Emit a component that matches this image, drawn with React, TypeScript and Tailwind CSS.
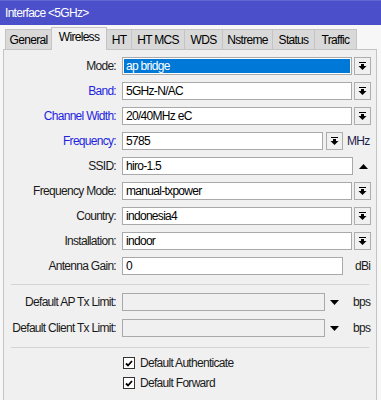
import React from "react";

const FONT = "font-['Liberation_Sans',Arial,sans-serif]";

const DropIcon = () => (
  <svg width="9" height="9" viewBox="0 0 9 9" className="fill-black">
    <rect x="1" y="0" width="7" height="1" />
    <rect x="3" y="2" width="3" height="2" />
    <path d="M0.5 4h8L4.5 8z" />
  </svg>
);

const DropButton = () => (
  <div className="w-[17px] h-[18px] border border-[#adadad] bg-[#f0f0f0] flex items-center justify-center shrink-0">
    <DropIcon />
  </div>
);

const tabs = [
  { name: "General", w: "w-[47px]" },
  { name: "Wireless", w: "w-[56px]" },
  { name: "HT", w: "w-[26px]" },
  { name: "HT MCS", w: "w-[54px]" },
  { name: "WDS", w: "w-[39px]" },
  { name: "Nstreme", w: "w-[51px]" },
  { name: "Status", w: "w-[43px]" },
  { name: "Traffic", w: "w-[43px]" },
];

type Row = {
  label: string;
  value: string;
  blue?: boolean;
  kind: "select" | "freq" | "ssid" | "gain";
  selected?: boolean;
};

const rows: Row[] = [
  { label: "Mode:", value: "ap bridge", kind: "select", selected: true },
  { label: "Band:", value: "5GHz-N/AC", kind: "select", blue: true },
  { label: "Channel Width:", value: "20/40MHz eC", kind: "select", blue: true },
  { label: "Frequency:", value: "5785", kind: "freq", blue: true },
  { label: "SSID:", value: "hiro-1.5", kind: "ssid" },
  { label: "Frequency Mode:", value: "manual-txpower", kind: "select" },
  { label: "Country:", value: "indonesia4", kind: "select" },
  { label: "Installation:", value: "indoor", kind: "select" },
  { label: "Antenna Gain:", value: "0", kind: "gain" },
];

const Label = ({ text, blue }: { text: string; blue?: boolean }) => (
  <div
    className={`w-[112px] text-right shrink-0 whitespace-nowrap leading-[18px] ${
      blue ? "text-[#1f1fe0]" : "text-[#1a1a1a]"
    }`}
  >
    {text}
  </div>
);

const Field = ({ value, width, selected }: { value: string; width: string; selected?: boolean }) => (
  <div className={`${width} h-[18px] border border-[#a9a9a9] bg-white shrink-0 p-px`}>
    <div
      className={`h-full leading-[14px] pl-[2px] whitespace-nowrap overflow-hidden ${
        selected ? "bg-[#0078d7] text-white" : "text-black"
      }`}
    >
      {value}
    </div>
  </div>
);

const Checkbox = ({ label }: { label: string }) => (
  <div className="flex items-center h-[20px]">
    <div className="w-[12px] h-[12px] border border-[#333] bg-white flex items-center justify-center">
      <svg width="8" height="7" viewBox="0 0 8 7">
        <path d="M1 3.5l2 2L7 1" fill="none" stroke="black" strokeWidth="1.8" />
      </svg>
    </div>
    <span className="ml-[5px] text-[#1a1a1a]">{label}</span>
  </div>
);

export default function App() {
  return (
    <div
      className={`w-[381px] h-[400px] bg-[#f7f7f7] overflow-hidden text-[12px] tracking-[-0.7px] ${FONT}`}
    >
      <div className="h-[25px] bg-[#4b4fc9] text-white pl-[5px] flex items-center border-t border-[#6366d2]">
        Interface &lt;5GHz&gt;
      </div>

      <div className="h-[24px] flex items-end pl-[5px]">
        {tabs.map((t) =>
          t.name === "Wireless" ? (
            <div
              key={t.name}
              className={`${t.w} h-[23px] -mb-px -ml-px relative bg-[#f0f0f0] border border-b-0 border-[#c4c4c4] text-center leading-[19px] text-black`}
            >
              {t.name}
            </div>
          ) : (
            <div
              key={t.name}
              className={`${t.w} h-[20px] bg-[#d9d9d9] border border-b-0 border-[#c4c4c4] -ml-px first:ml-0 text-center leading-[20px] text-black`}
            >
              {t.name}
            </div>
          )
        )}
      </div>

      <div className="ml-[3px] w-[374px] h-[351px] bg-[#f0f0f0] border border-b-0 border-[#c4c4c4] pt-[7px]">
        <div className="flex flex-col gap-[7px]">
          {rows.map((r) => (
            <div key={r.label} className="flex items-center h-[18px]">
              <Label text={r.label} blue={r.blue} />
              <div className="ml-[6px] flex items-center">
                {r.kind === "select" && (
                  <>
                    <Field value={r.value} width="w-[230px]" selected={r.selected} />
                    <div className="ml-[2px]">
                      <DropButton />
                    </div>
                  </>
                )}
                {r.kind === "freq" && (
                  <>
                    <Field value={r.value} width="w-[201px]" />
                    <div className="ml-[3px]">
                      <DropButton />
                    </div>
                    <span className="ml-[4px] text-[#1c1c4a]">MHz</span>
                  </>
                )}
                {r.kind === "ssid" && (
                  <>
                    <Field value={r.value} width="w-[231px]" />
                    <svg width="9" height="5" viewBox="0 0 9 5" className="ml-[6px]">
                      <path d="M0 5h9L4.5 0z" fill="black" />
                    </svg>
                  </>
                )}
                {r.kind === "gain" && (
                  <>
                    <Field value={r.value} width="w-[221px]" />
                    <span className="ml-[12px] text-[#1a1a1a]">dBi</span>
                  </>
                )}
              </div>
            </div>
          ))}
        </div>

        <div className="mt-[9px] mx-[7px] h-px bg-[#d4d4d4]" />

        <div className="mt-[8px] flex flex-col gap-[8px]">
          {["Default AP Tx Limit:", "Default Client Tx Limit:"].map((l) => (
            <div key={l} className="flex items-center h-[18px]">
              <Label text={l} />
              <div className="ml-[6px] w-[203px] h-[18px] border border-[#a9a9a9] bg-[#f0f0f0]" />
              <svg width="9" height="5" viewBox="0 0 9 5" className="ml-[5px]">
                <path d="M0 0h9L4.5 5z" fill="black" />
              </svg>
              <span className="ml-[14px] text-[#1a1a1a]">bps</span>
            </div>
          ))}
        </div>

        <div className="mt-[10px] mx-[7px] h-px bg-[#d4d4d4]" />

        <div className="mt-[5px] pl-[119px] flex flex-col">
          <Checkbox label="Default Authenticate" />
          <Checkbox label="Default Forward" />
        </div>
      </div>
    </div>
  );
}
